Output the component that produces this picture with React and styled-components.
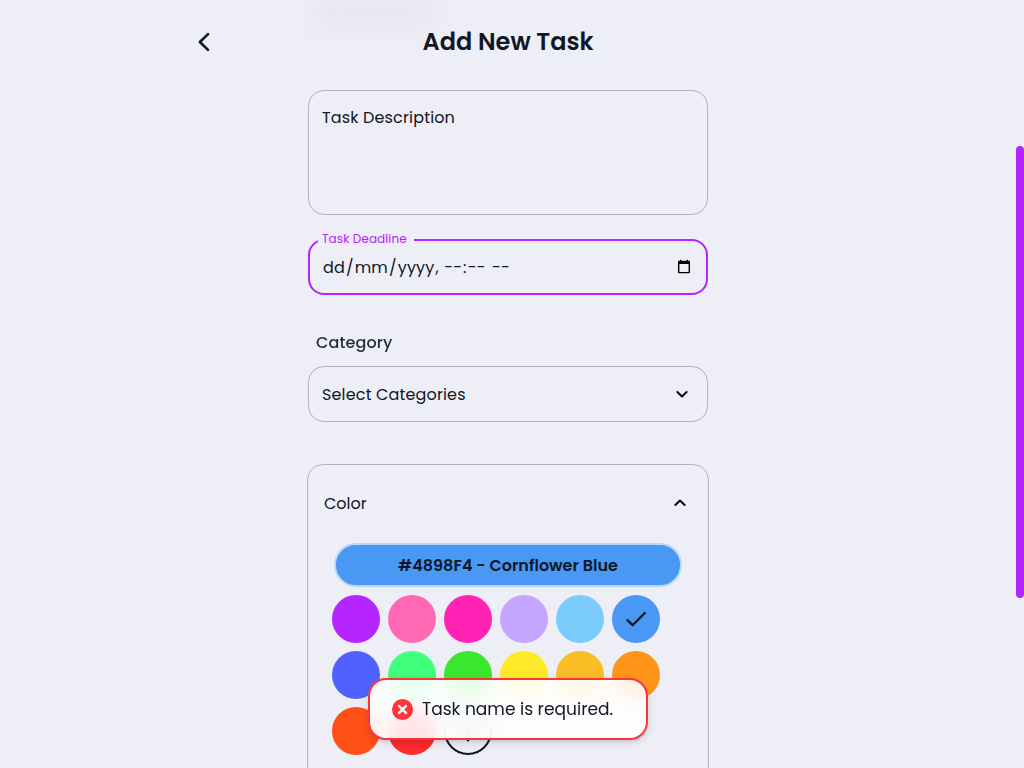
import React from "react";
import styled, { createGlobalStyle } from "styled-components";

const ink = "#101727";
const purple = "#b624ff";

const Global = createGlobalStyle`
  * { box-sizing: border-box; }
  html, body { margin: 0; height: 100%; overflow: hidden; background: #edeef6; }
  body { font-family: Poppins, Inter, "Open Sans", sans-serif; color: ${ink}; font-size: 16px; }
`;

const Page = styled.div`
  height: 768px;
  overflow: hidden;
  display: flex;
  flex-direction: column;
  align-items: center;
`;

const Header = styled.header`
  position: relative;
  width: 100%;
  height: 90px;
  flex: none;
  display: flex;
  align-items: flex-start;
  padding: 24px 0 0 192px;
`;

const Haze = styled.div`
  position: absolute;
  left: 316px;
  top: -6px;
  width: 114px;
  height: 34px;
  background: #e7e8f0;
  filter: blur(9px);
`;

const BackButton = styled.button`
  position: relative;
  width: 24px;
  height: 36px;
  padding: 0;
  border: 0;
  background: none;
  color: ${ink};
  display: grid;
  place-items: center;
`;

const Title = styled.h1`
  position: relative;
  margin: 0 0 0 206.5px;
  width: 172px;
  font-size: 24px;
  line-height: 36px;
  font-weight: 600;
  white-space: nowrap;
`;

const Text = styled.span`
  font-size: ${(p) => p.$size || 16}px;
  font-weight: ${(p) => p.$weight || 400};
  letter-spacing: ${(p) => p.$track || 0}px;
  line-height: 24px;
  white-space: nowrap;
`;

const Form = styled.main`
  width: 400px;
  flex: none;
  margin-right: 8px;
  display: flex;
  flex-direction: column;
`;

const Outline = styled.div`
  height: ${(p) => p.$height}px;
  border: 1px solid #b1b2bf;
  border-radius: 16px;
  display: flex;
  justify-content: space-between;
  align-items: ${(p) => p.$align || "center"};
  padding: ${(p) => p.$pad || "0 13px"};
`;

const Deadline = styled.fieldset`
  margin: 19px 0 0;
  height: 61px;
  min-width: 0;
  border: 2px solid ${purple};
  border-radius: 16px;
  padding: 0 14px 0 8px;
`;

const Legend = styled.legend`
  width: 96px;
  height: 12px;
  padding: 0 4px;
  font-size: 12px;
  line-height: 10px;
  letter-spacing: 0.1px;
  white-space: nowrap;
  color: ${purple};
`;

const DateRow = styled.div`
  display: flex;
  align-items: flex-start;
  justify-content: space-between;
  padding: 10px 0 0 4px;
`;

const DateField = styled.span`
  padding: 0 1px;
`;

const CalendarIcon = styled.svg`
  margin-top: 3px;
`;

const Label = styled.label`
  margin: 36px 0 11px 8px;
  height: 24px;
  display: flex;
  opacity: 0.9;
`;

const SelectBox = styled(Outline)`
  & > span { padding-top: 2px; }
`;

const ColorPanel = styled.section`
  margin: 42px -1px 0;
  height: 340px;
  flex: none;
  border: 1px solid #b1b2bf;
  border-radius: 16px;
  padding: 26px 16px 0;
`;

const PanelHead = styled.div`
  display: flex;
  justify-content: space-between;
  align-items: center;
  height: 24px;
  line-height: 24px;
  & > span { padding-top: 2px; }
`;

const Selected = styled.div`
  margin: 28px 10px 8px;
  height: 44px;
  border: 2px solid #b5d8fa;
  border-radius: 22px;
  background: #4898f4;
  display: flex;
  align-items: center;
  justify-content: center;
  padding-top: 2px;
`;

const Swatches = styled.div`
  display: grid;
  grid-template-columns: repeat(6, 48px);
  gap: 8px;
  padding-left: 8px;
`;

const Swatch = styled.div`
  height: 48px;
  border-radius: 50%;
  background: ${(p) => p.$color};
  border: ${(p) => (p.$outlined ? `2px solid ${ink}` : "0")};
  display: grid;
  place-items: center;
`;

const Toast = styled.div`
  position: fixed;
  left: 368px;
  top: 678px;
  width: 280px;
  height: 62px;
  border: 2px solid #f7353b;
  border-radius: 18px;
  background: rgba(255, 255, 255, 0.88);
  backdrop-filter: blur(9px);
  box-shadow: 0 3px 10px rgba(0, 0, 0, 0.12), 0 2px 3px rgba(0, 0, 0, 0.06);
  display: flex;
  align-items: center;
  gap: 9px;
  padding: 0 0 0 22px;
`;

const ScrollThumb = styled.div`
  position: fixed;
  right: 0;
  top: 146px;
  width: 8px;
  height: 452px;
  border-radius: 4px;
  background: ${purple};
`;

const Chevron = ({ up }) => (
  <svg width="24" height="24" viewBox="0 0 24 24" fill="none" stroke="#0b0f1c" strokeWidth="2.1" strokeLinecap="round" strokeLinejoin="round">
    <path d={up ? "M7.4 14 12 9.5l4.6 4.5" : "M7.4 10 12 14.5l4.6-4.5"} />
  </svg>
);

const colors = [
  "#b624ff", "#ff69b4", "#ff22b4", "#c5a5ff", "#7acbfc", "#4898f4",
  "#5061ff", "#3fff7c", "#3be82f", "#ffea28", "#f9be26", "#ff9518",
  "#ff5018", "#ff2a2e",
];

export default function App() {
  return (
    <Page>
      <Global />
      <Header>
        <Haze />
        <BackButton aria-label="Back">
          <svg width="24" height="24" viewBox="0 0 24 24" fill="none" stroke="currentColor" strokeWidth="2.7" strokeLinecap="round" strokeLinejoin="round">
            <path d="M16 4.1 7.9 12l8.1 7.9" />
          </svg>
        </BackButton>
        <Title>Add New Task</Title>
      </Header>
      <Form>
        <Outline $height={125} $align="flex-start" $pad="15px 13px">
          <Text $track={0.15}>Task Description</Text>
        </Outline>
        <Deadline>
          <Legend>Task Deadline</Legend>
          <DateRow>
            <Text $track={0.15}>
              <DateField>dd</DateField>/<DateField>mm</DateField>/<DateField>yyyy</DateField>,{" "}
              <DateField>--</DateField>:<DateField>--</DateField>{" "}
              <DateField>--</DateField>
            </Text>
            <CalendarIcon width="16" height="16" viewBox="0 0 16 16" fill="none">
              <rect x="2.7" y="2.5" width="10.6" height="11.1" rx="0.6" stroke="#000" strokeWidth="1.4" />
              <path d="M2 2.6Q2 2 2.6 2h10.8q.6 0 .6.6V5H2zM4 .8h1.3V2H4zM10.7.8H12V2h-1.3z" fill="#000" />
            </CalendarIcon>
          </DateRow>
        </Deadline>
        <Label><Text $weight={500} $track={0.1}>Category</Text></Label>
        <SelectBox $height={56}>
          <Text $track={0.15}>Select Categories</Text>
          <Chevron />
        </SelectBox>
        <ColorPanel>
          <PanelHead>
            <Text>Color</Text>
            <Chevron up />
          </PanelHead>
          <Selected><Text $weight={600}>#4898F4 - Cornflower Blue</Text></Selected>
          <Swatches>
            {colors.map((color, i) => (
              <Swatch key={color} $color={color}>
                {i === 5 && (
                  <svg width="24" height="24" viewBox="0 0 24 24" fill="none" stroke={ink} strokeWidth="2.3" strokeLinecap="round" strokeLinejoin="round">
                    <path d="m3.4 13.2 5.2 5L20.8 6" />
                  </svg>
                )}
              </Swatch>
            ))}
            <Swatch $color="transparent" $outlined>
              <svg width="24" height="24" viewBox="0 0 24 24" stroke={ink} strokeWidth="2.4" strokeLinecap="round">
                <path d="M12 3v18.2M3 12h18" />
              </svg>
            </Swatch>
          </Swatches>
        </ColorPanel>
      </Form>
      <Toast role="alert">
        <svg width="21" height="21" viewBox="0 0 20 20">
          <circle cx="10" cy="10" r="10" fill="#ff3338" />
          <path d="m6.1 6.1 7.8 7.8m0-7.8-7.8 7.8" stroke="#fff" strokeWidth="2.2" />
        </svg>
        <Text $size={17.05}>Task name is required.</Text>
      </Toast>
      <ScrollThumb />
    </Page>
  );
}
